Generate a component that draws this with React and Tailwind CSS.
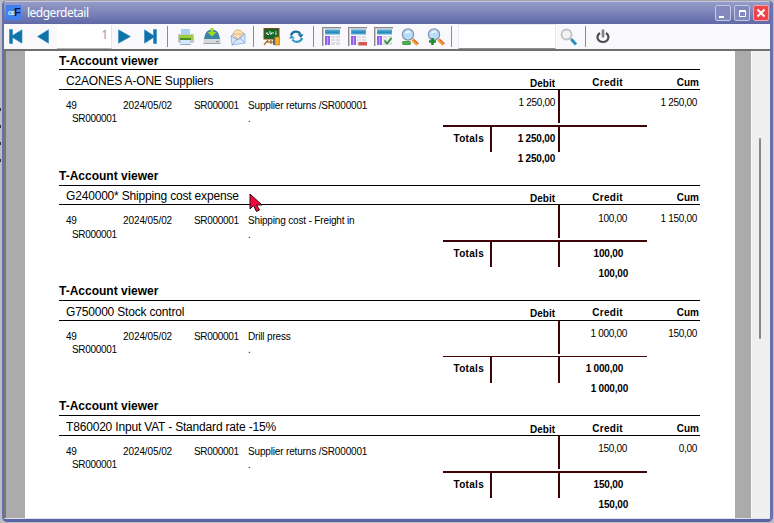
import React from "react";

const accounts = [
  {
    name: "C2AONES A-ONE Suppliers", desc: "Supplier returns /SR000001",
    debit: "1 250,00", credit: "", cum: "1 250,00",
    titleH: "h-[18px]", headH: "h-[20px]", headPb: "pb-0", bodyH: "h-[35px]", footH: "h-[42px]",
    amountPt: "pt-[6px]", subPt: "pt-0", barH: "h-[2px]", totalsH: "h-[25px]", finalPt: "pt-px",
  },
  {
    name: "G240000* Shipping cost expense", desc: "Shipping cost - Freight in",
    debit: "", credit: "100,00", cum: "1 150,00",
    titleH: "h-[19px]", headH: "h-[19px]", headPb: "pb-0", bodyH: "h-[35px]", footH: "h-[42px]",
    amountPt: "pt-[7px]", subPt: "pt-px", barH: "h-[2px]", totalsH: "h-[25px]", finalPt: "pt-px",
  },
  {
    name: "G750000 Stock control", desc: "Drill press",
    debit: "", credit: "1 000,00", cum: "150,00",
    titleH: "h-[19px]", headH: "h-[20px]", headPb: "pb-px", bodyH: "h-[35px]", footH: "h-[41px]",
    amountPt: "pt-[6px]", subPt: "pt-0", barH: "h-px", totalsH: "h-[26px]", finalPt: "pt-0",
  },
  {
    name: "T860020 Input VAT - Standard rate -15%", desc: "Supplier returns /SR000001",
    debit: "", credit: "150,00", cum: "0,00",
    titleH: "h-[19px]", headH: "h-[20px]", headPb: "pb-0", bodyH: "h-[35px]", footH: "h-[42px]",
    amountPt: "pt-[6px]", subPt: "pt-0", barH: "h-[2px]", totalsH: "h-[25px]", finalPt: "pt-px",
  },
];

function Account({ a }) {
  return (
    <section className="w-[641px] shrink-0">
      <h2 className={`${a.titleH} border-b border-black text-[12px] leading-[15px] font-bold`}>
        <span className="block pt-[2px]">T-Account viewer</span>
      </h2>
      <div className={`${a.headH} flex items-end border-b border-black pl-[7px] text-[10px] leading-[11px] font-bold`}>
        <span className="w-[430px] text-[12px] leading-[15px] font-normal tracking-[-0.015em]">{a.name}</span>
        <span className={`w-[59px] text-right ${a.headPb}`}>Debit</span>
        <span className={`w-[68px] text-right tracking-[0.03em] ${a.headPb}`}><span className="block pb-px">Credit</span></span>
        <span className={`w-[76px] text-right ${a.headPb}`}><span className="block pb-px">Cum</span></span>
      </div>
      <div className={`${a.bodyH} flex pl-[7px] text-[10px] leading-[13px] tracking-[-0.03em]`}>
        <div className="w-[57px] pt-[9px]">
          <div>49</div>
          <div className={`pl-[6px] ${a.subPt}`}>SR000001</div>
        </div>
        <div className="w-[71px] pt-[9px] tracking-[-0.01em]">2024/05/02</div>
        <div className="w-[54px] pt-[9px]">SR000001</div>
        <div className="w-[250px] pt-[9px] tracking-[-0.016em]">
          <div>{a.desc}</div>
          <div className={a.subPt}>.</div>
        </div>
        <div className={`w-[57px] text-right ${a.amountPt}`}>{a.debit}</div>
        <div className="mx-[3px] h-[33px] w-[2px] bg-[#3d0306]" />
        <div className={`w-[64px] text-right ${a.amountPt}`}>{a.credit}</div>
        <div className={`w-[70px] text-right ${a.amountPt}`}>{a.cum}</div>
      </div>
      <div className={`${a.footH} pl-[384px] text-[10px] leading-[12px] font-bold tracking-[-0.02em]`}>
        <div className={`${a.barH} w-[204px] bg-[#3d0306]`} />
        <div className={`${a.totalsH} flex items-stretch`}>
          <div className="w-[41px] pt-[6px] text-right tracking-[0.03em]">Totals</div>
          <div className="ml-[6px] w-[2px] bg-[#3d0306]" />
          <div className="w-[63px] pt-[6px] text-right">{a.debit}</div>
          <div className="ml-[3px] w-[2px] bg-[#3d0306]" />
          <div className="w-[63px] pt-[6px] text-right">{a.credit}</div>
        </div>
        <div className={`flex ${a.finalPt}`}>
          <div className="w-[112px] text-right">{a.debit}</div>
          <div className="w-[73px] text-right">{a.credit}</div>
        </div>
      </div>
    </section>
  );
}

const Sep = ({ className }) => <div className={`h-[21px] w-px shrink-0 bg-[#8b8b8f] ${className}`} />;

function Nav({ className, w, d }) {
  return (
    <svg className={`shrink-0 ${className}`} width={w} height="15" viewBox={`0 0 ${w} 15`}>
      <path d={d} fill="#0f72a8" stroke="#2d8fc0" strokeWidth="0.6" />
    </svg>
  );
}

function Printer() {
  return (
    <svg className="ml-[9px] shrink-0" width="18" height="18" viewBox="0 0 18 18">
      <rect x="4" y="1" width="9" height="7" fill="#a9d3f5" />
      <rect x="1" y="6" width="16" height="9" rx="1" fill="#c3c6cc" />
      <rect x="2" y="7" width="14" height="5" rx="1" fill="#9ccf3c" />
      <rect x="3" y="10" width="11" height="2" fill="#4c8d1c" />
      <rect x="4" y="12" width="9" height="4" fill="#cfe8fb" />
      <path d="M3 16.500h11" stroke="#8eaecb" />
    </svg>
  );
}

function Download() {
  return (
    <svg className="ml-[8px] shrink-0" width="18" height="18" viewBox="0 0 18 18">
      <path d="M1 11C2 5 4 1.500 9 1.500S16 5 17 11z" fill="#3b84a8" />
      <path d="M0.500 11h17v4.500h-17z" fill="#d5d8dc" />
      <path d="M0.500 15.500h17" stroke="#9da1a7" />
      <path d="M7.500 0h3v4h3L9 8.500 4.500 4h3z" fill="#a4d81d" />
      <path d="M13 13.500h3" stroke="#8c9096" />
    </svg>
  );
}

function Mail() {
  return (
    <svg className="ml-[9px] shrink-0" width="16" height="18" viewBox="0 0 16 18">
      <path d="M1 8L8 2l7 4v9L2 17z" fill="#d7e9fb" stroke="#8fb2e0" strokeWidth="0.9" />
      <path d="M3 7c0-3 2-5 5-5s5 2 5 4l-5 5z" fill="#fbe3bd" stroke="#e0a860" strokeWidth="0.8" />
      <path d="M4 6h8" stroke="#e8b271" />
      <path d="M1 8l7 4 7-6M2 17l5-6M15 15l-5-5" fill="none" stroke="#7ea5d8" strokeWidth="0.9" />
    </svg>
  );
}

function Board() {
  return (
    <svg className="ml-[9px] shrink-0" width="18" height="18" viewBox="0 0 18 18">
      <path d="M5 12l-4 5M8 12v4M3 14h8" stroke="#b0702e" strokeWidth="1.300" />
      <rect x="1" y="0.500" width="15" height="10.500" fill="#12692a" stroke="#7a4a1c" />
      <path d="M3 6l1-1.500L5 7l1-1M7 3v3h1.500V4.500M10 6V4M12 4h1.500M12 6h2" stroke="#e4f3e4" fill="none" />
      <rect x="10" y="11" width="4" height="6" fill="#3f64b0" />
      <path d="M12 9h4.500v8H12z" fill="#f0ae24" stroke="#b77a15" strokeWidth="0.700" />
    </svg>
  );
}

function Refresh() {
  return (
    <svg className="ml-[8px] shrink-0" width="15" height="15" viewBox="0 0 15 15">
      <path d="M2 6.500C3 2.500 9 .8 11.500 5" fill="none" stroke="#1d6f9f" strokeWidth="2.200" />
      <path d="M8.500 5.200h6L12 9z" fill="#1d6f9f" />
      <path d="M13 9C12 13 6 14.500 3.300 10.500" fill="none" stroke="#3096c8" strokeWidth="2.200" />
      <path d="M0 9.500L2.500 6l3.500 3.600z" fill="#3096c8" />
    </svg>
  );
}

function GridIcon({ className, kind }) {
  return (
    <svg className={`shrink-0 ${className}`} width="19" height="19" viewBox="0 0 19 19">
      <path d="M0 0h19v1H1v18H0z" fill="#8b8b8f" />
      <path d="M1 1h18v1H2v17H1z" fill="#c9c9cc" />
      <rect x="3" y="2.500" width="15" height="5" fill="#4aa3d1" />
      <rect x="4" y="4.500" width="13" height="1.500" fill="#2f86b8" />
      <rect x="3" y="9" width="5" height="9" fill="#9460f0" />
      <rect x="5" y="10" width="1" height="8" fill="#c9a4ff" />
      <rect x="9" y="9" width="9" height="9" fill="#dcdde3" />
      <path d="M9 11.500h9M9 14.500h9M13.500 9v9" stroke="#f6f6fa" />
      {kind === "minus" && <rect x="10.500" y="15" width="8.500" height="3.500" fill="#d9534f" />}
      {kind === "check" && <path d="M10.500 13.500l2.500 3L17.500 11" fill="none" stroke="#2f8f35" strokeWidth="1.800" />}
    </svg>
  );
}

function Zoom({ className, plus }) {
  return (
    <svg className={`shrink-0 ${className}`} width="18" height="18" viewBox="0 0 18 18">
      <path d="M11.500 11.500l5 5" stroke="#f59a2c" strokeWidth="3.200" />
      <path d="M13 11.500l4.500 4.500" stroke="#d2452a" strokeWidth="1" />
      <circle cx="7" cy="6.500" r="5.600" fill="#b9dcfa" stroke="#8695ad" strokeWidth="1.300" />
      <path d="M3.500 6C4.500 3 8 2 10 4.500 8 4.500 6 5 3.500 6z" fill="#eff8ff" />
      {plus ? (
        <path d="M5.500 10v7M2 13.500h7" stroke="#1f8c2c" strokeWidth="2.600" />
      ) : (
        <rect x="1.500" y="13.500" width="8" height="3" rx="0.800" fill="#57b04e" stroke="#2c8532" strokeWidth="0.800" />
      )}
    </svg>
  );
}

function Search() {
  return (
    <svg className="ml-[4px] shrink-0" width="18" height="18" viewBox="0 0 18 18">
      <path d="M10.500 10.500l2 2" stroke="#9a9da3" strokeWidth="2" />
      <path d="M11.500 11.500l4.500 5" stroke="#2e8cbd" strokeWidth="3" />
      <circle cx="6.500" cy="6.500" r="5" fill="#f1f2f5" stroke="#c2c2c4" strokeWidth="1.800" />
    </svg>
  );
}

function Power() {
  return (
    <svg className="ml-[10px] shrink-0" width="14" height="15" viewBox="0 0 14 15">
      <path d="M4 4C-.8 7 1.800 13 7 13s7.500-6 3-9" fill="none" stroke="#4e4e50" strokeWidth="2.200" />
      <path d="M7 0.500v8" stroke="#808083" strokeWidth="2.600" />
    </svg>
  );
}

const winBtn = "flex h-[16px] w-[16px] items-center justify-center rounded-[2px] border";

export default function App() {
  return (
    <div className="relative flex h-[523px] w-[774px] overflow-hidden bg-[#bcbdc4] font-['Liberation_Sans',Arial,sans-serif] text-black">
      <div className="flex w-[2px] shrink-0 flex-col gap-[14px] pt-[108px]">
        <i className="h-[3px] w-px bg-[#333]" /><i className="h-[3px] w-px bg-[#333]" />
        <i className="h-[3px] w-px bg-[#333]" /><i className="h-[3px] w-px bg-[#333]" />
      </div>
      <div className="flex h-[522px] w-[771px] flex-col overflow-hidden rounded-[5px] border-t border-r-[3px] border-b-[3px] border-l-2 border-t-[#a3a3aa] border-r-[#6872ad] border-b-[#5664a4] border-l-[#6670ad] bg-[#f9f9fc]">
        <header className="flex h-[23px] shrink-0 items-center border-t border-b border-t-[#c4c6df] border-b-[#6068a6] bg-linear-to-b from-[#969cc8] to-[#626ba8] pl-[2px]">
          <div className="flex h-[15px] w-[15px] items-center justify-center rounded-[1px] bg-[#3f80ee] font-bold tracking-[-0.1em]">
            <span className="text-[8px] text-[#d6e9ff]">os</span><span className="text-[11px] text-[#0c1544]">F</span>
          </div>
          <h1 className="ml-[6px] font-['Noto_Sans',sans-serif] text-[12px] leading-[16px] tracking-[-0.5px] text-white">ledgerdetail</h1>
          <div className="ml-auto flex gap-[3px] pr-px">
            <div className={`${winBtn} border-[#c3c8e4] bg-[#8189bd]`}><svg width="14" height="14"><rect x="3" y="10" width="5" height="2" fill="#fff" /></svg></div>
            <div className={`${winBtn} border-[#c3c8e4] bg-[#8189bd]`}><svg width="14" height="14"><path d="M4.500 4.500h6v6h-6zM4 5.500h7" fill="none" stroke="#fff" /></svg></div>
            <div className={`${winBtn} border-[#f0a5b0] bg-[#f04448]`}><svg width="14" height="14"><path d="M3.500 3.500l7 7M10.500 3.500l-7 7" stroke="#fff" strokeWidth="2" /></svg></div>
          </div>
        </header>
        <nav className="flex h-[25px] shrink-0 items-center">
          <Nav className="ml-[5px]" w={14} d="M.5.5h3v6L13 .8v13.400L3.500 8.500v6h-3z" />
          <Nav className="ml-[14px]" w={12} d="M11.500.8v13.400L.5 7.500z" />
          <div className="ml-[8px] h-[24px] w-[55px] border-r border-b border-[#b7b7bb] border-r-[#e6e6ea] bg-white pr-[3px] text-right font-['Noto_Sans',sans-serif] text-[12px] leading-[20px] text-[#a58fce]">1</div>
          <Nav className="ml-[6px]" w={13} d="M.5.8v13.400L12.500 7.500z" />
          <Nav className="ml-[13px]" w={13} d="M12.500.5h-3v6L.5.8v13.400l9-5.700v6h3z" />
          <Sep className="ml-[10px]" />
          <Printer /><Download /><Mail />
          <Sep className="ml-[7px]" />
          <Board /><Refresh />
          <Sep className="ml-[9px]" />
          <GridIcon className="ml-[8px]" /><GridIcon className="ml-[7px]" kind="minus" /><GridIcon className="ml-[7px]" kind="check" />
          <Zoom className="ml-[8px]" /><Zoom className="ml-[8px]" plus />
          <Sep className="ml-[6px]" />
          <div className="ml-[6px] h-[25px] w-[98px] border border-[#e9e9ed] border-b-[#8c9090] bg-white" />
          <Search />
          <Sep className="ml-[7px]" />
          <Power />
        </nav>
        <main className="flex min-h-0 flex-1 border-t-2 border-t-[#707070] border-b border-b-[#e2e2e6]">
          <div className="w-[21px] shrink-0 border-l-2 border-l-[#777] bg-[#ababab]" />
          <div className="flex w-[710px] shrink-0 flex-col overflow-hidden bg-white pt-px pl-[34px]">
            {accounts.map((a) => <Account key={a.name} a={a} />)}
          </div>
          <div className="w-[16px] shrink-0 bg-[#ababab]" />
          <div className="flex flex-1 border-l border-l-[#fafafa] bg-[#efefef] pt-[87px] pl-[7px]">
            <div className="h-[201px] w-[2px] rounded bg-[#858585]" />
          </div>
        </main>
      </div>
      <svg className="absolute top-[193px] left-[249px]" width="15" height="20" viewBox="0 0 15 20">
        <path d="M1 1v15l3.500-3.500 3 6 3-1.500-3-5H13z" fill="#f5083c" stroke="#2a0a12" />
      </svg>
    </div>
  );
}
